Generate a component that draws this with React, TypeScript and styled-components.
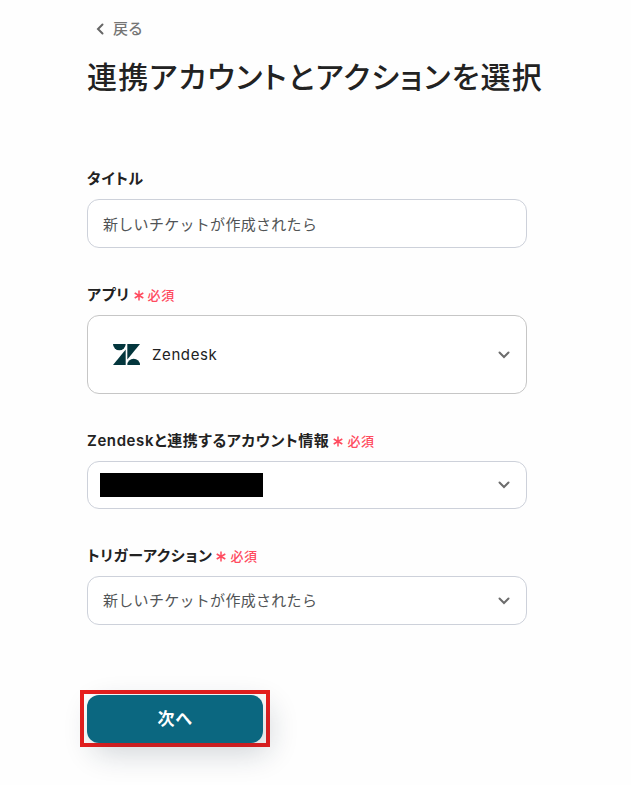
import React from "react";
import styled, { createGlobalStyle } from "styled-components";

const GlobalStyle = createGlobalStyle`
  * { box-sizing: border-box; }
  body {
    margin: 0;
    background: #fefefe;
    color: #222;
    font-family: Inter, "Noto Sans CJK JP", sans-serif;
    font-size: 15px;
    letter-spacing: 0.04em;
    font-feature-settings: "palt";
  }
`;

const Page = styled.main`
  padding: 17px 24px 36px 87px;
`;

const BackLink = styled.a`
  display: inline-flex;
  align-items: center;
  gap: 8px;
  margin-left: 8px;
  color: #757575;
  font-weight: 500;
  line-height: 24px;
  text-decoration: none;
`;

const Title = styled.h1`
  margin: 12px 0 66px;
  font-size: 30px;
  font-weight: 500;
  letter-spacing: 0.04em;
  line-height: 48px;
`;

const Form = styled.form`
  display: flex;
  flex-direction: column;
  gap: 35px;
  max-width: 440px;
`;

const Field = styled.div`
  display: flex;
  flex-direction: column;
  gap: 8px;
`;

const Label = styled.label`
  display: flex;
  align-items: center;
  gap: 4px;
  font-weight: 600;
  line-height: 24px;
`;

const Required = styled.span`
  display: inline-flex;
  align-items: center;
  gap: 4px;
  color: #ff4b5f;
  font-size: 13px;
  font-weight: 500;
  line-height: 24px;
`;

const Control = styled.div`
  display: grid;
  align-items: center;

  > * { grid-area: 1 / 1; }
`;

const TextInput = styled.input`
  width: 100%;
  height: 49px;
  padding: 0 15px;
  border: 1px solid #cdd1da;
  border-radius: 12px;
  background: #fff;
  color: #515456;
  font: inherit;
  font-feature-settings: normal;
  letter-spacing: 0.02em;
`;

const Select = styled.select<{ $height: number; $withLogo?: boolean }>`
  width: 100%;
  height: ${(p) => p.$height}px;
  padding: 0 48px 0 ${(p) => (p.$withLogo ? 64 : 15)}px;
  border: 1px solid ${(p) => (p.$withLogo ? "#c6c6c6" : "#cdd1da")};
  border-radius: 12px;
  appearance: none;
  background: #fff;
  color: ${(p) => (p.$withLogo ? "#222" : "#515456")};
  font: inherit;
  font-feature-settings: normal;
  letter-spacing: ${(p) => (p.$withLogo ? "0.04em" : "0.02em")};
`;

const Chevron = styled.svg`
  justify-self: end;
  margin-right: 17px;
  pointer-events: none;
`;

const Logo = styled.svg`
  margin-left: 26px;
  pointer-events: none;
`;

const Redaction = styled.span`
  width: 163px;
  height: 24px;
  margin-left: 13px;
  background: #000;
  pointer-events: none;
`;

const Frame = styled.div`
  width: fit-content;
  margin: 30px 0 0 -7px;
  padding: 1px 3px 0;
  border: 4px solid #e81e1e;
`;

const NextButton = styled.button`
  display: block;
  width: 176px;
  height: 48px;
  padding: 0 0 3px;
  border: 0;
  border-radius: 12px;
  background: #0b6780;
  box-shadow: 6px 10px 30px rgba(20, 40, 60, 0.2);
  color: #fff;
  font: inherit;
  font-size: 17px;
  font-weight: 600;
  letter-spacing: inherit;
`;

function DownIcon() {
  return (
    <Chevron width="12" height="8" viewBox="0 0 12 8" aria-hidden="true">
      <path d="M1.5 1.5 6 6l4.5-4.5" fill="none" stroke="#6c6c6c" strokeWidth="2" strokeLinecap="round" />
    </Chevron>
  );
}

function RequiredMark() {
  return (
    <Required>
      <svg width="10" height="11" viewBox="0 0 10 11" aria-hidden="true">
        <path d="M5 .5v10M.7 3l8.6 5M9.3 3 .7 8" fill="none" stroke="currentColor" strokeWidth="1.5" />
      </svg>
      必須
    </Required>
  );
}

export default function App() {
  return (
    <>
      <GlobalStyle />
      <Page>
        <BackLink href="#">
          <svg width="10" height="12" viewBox="0 0 10 12" aria-hidden="true">
            <path d="M7.5 1.5 3 6l4.5 4.5" fill="none" stroke="#666" strokeWidth="2" strokeLinecap="round" />
          </svg>
          戻る
        </BackLink>
        <Title>連携アカウントとアクションを選択</Title>
        <Form onSubmit={(e) => e.preventDefault()}>
          <Field>
            <Label htmlFor="title">タイトル</Label>
            <TextInput id="title" defaultValue="新しいチケットが作成されたら" />
          </Field>
          <Field>
            <Label htmlFor="app">アプリ<RequiredMark /></Label>
            <Control>
              <Select id="app" $height={79} $withLogo>
                <option>Zendesk</option>
              </Select>
              <Logo width="27" height="21" viewBox="0 0 27 21" aria-hidden="true">
                <g fill="#03363d">
                  <path d="M0 0h12.7a6.35 6.35 0 0 1-12.7 0Z" />
                  <path d="M12.7 5.6V21H0Z" />
                  <path d="M14.3 0H27L14.3 15.4Z" />
                  <path d="M14.3 21a6.35 6.35 0 0 1 12.7 0Z" />
                </g>
              </Logo>
              <DownIcon />
            </Control>
          </Field>
          <Field>
            <Label htmlFor="account">Zendeskと連携するアカウント情報<RequiredMark /></Label>
            <Control>
              <Select id="account" $height={48}>
                <option value="" />
              </Select>
              <Redaction />
              <DownIcon />
            </Control>
          </Field>
          <Field>
            <Label htmlFor="trigger">トリガーアクション<RequiredMark /></Label>
            <Control>
              <Select id="trigger" $height={49}>
                <option>新しいチケットが作成されたら</option>
              </Select>
              <DownIcon />
            </Control>
          </Field>
          <Frame>
            <NextButton type="submit">次へ</NextButton>
          </Frame>
        </Form>
      </Page>
    </>
  );
}
